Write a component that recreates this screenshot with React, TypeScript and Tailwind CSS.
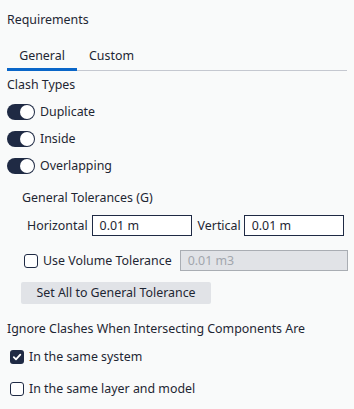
import React from "react";

function Toggle() {
  return (
    <div className="shrink-0 w-[28px] h-[16px] rounded-full bg-[#1f2a44] flex items-center justify-end pr-[1px]">
      <div className="w-[14px] h-[14px] rounded-full bg-white" />
    </div>
  );
}

function Check({ checked }: { checked?: boolean }) {
  return checked ? (
    <div className="shrink-0 w-[14px] h-[14px] rounded-[3px] bg-[#1f2a44] flex items-center justify-center">
      <svg width="10" height="10" viewBox="0 0 10 10">
        <path d="M1.8 5.2 L4 7.4 L8.3 2.6" stroke="white" strokeWidth="1.8" fill="none" strokeLinecap="round" strokeLinejoin="round" />
      </svg>
    </div>
  ) : (
    <div className="shrink-0 w-[14px] h-[14px] rounded-[3px] border border-[#1f2a44] bg-white" />
  );
}

export default function App() {
  return (
    <div className="w-[354px] h-[409px] bg-[#f9fafa] text-[#1e2633] text-[12.4px] leading-[18px] overflow-hidden whitespace-nowrap" style={{ fontFamily: "'Noto Sans', sans-serif" }}>
      <div className="px-[7px]">
        <div className="pt-[11px] h-[31px]">Requirements</div>
        <div className="mt-[15px] flex w-[340px] border-b border-[#c5c8d0] h-[25px]">
          <div className="w-[70px] pt-[1px] text-center border-b-[3px] border-[#0a66c8] -mb-[1px]">General</div>
          <div className="ml-[12px] pt-[1px]">Custom</div>
        </div>
        <div className="mt-[5px]">Clash Types</div>
        <div className="mt-[9px] flex flex-col gap-[9px]">
          {["Duplicate", "Inside", "Overlapping"].map((t) => (
            <div key={t} className="flex items-center gap-[5px]">
              <Toggle />
              <span>{t}</span>
            </div>
          ))}
        </div>
        <div className="ml-[15px] mt-[14px]">General Tolerances (G)</div>
        <div className="ml-[20px] mt-[8px] flex items-center">
          <span>Horizontal</span>
          <div className="ml-[4px] shrink-0 w-[100px] h-[21px] border border-[#1f2a44] bg-white px-[7px] flex items-center">0.01 m</div>
          <span className="ml-[6px]">Vertical</span>
          <div className="ml-[3px] shrink-0 w-[100px] h-[21px] border border-[#1f2a44] bg-white px-[7px] flex items-center">0.01 m</div>
        </div>
        <div className="ml-[17px] mt-[14px] flex items-center">
          <Check />
          <span className="ml-[5px]">Use Volume Tolerance</span>
          <div className="ml-[8px] shrink-0 w-[168px] h-[21px] border border-[#a9adb3] bg-[#e1e3e7] px-[7px] flex items-center text-[#a2a6ad]">0.01 m3</div>
        </div>
        <div className="ml-[14px] mt-[11px] w-[190px] h-[22px] rounded-[2px] bg-[#e1e3e7] flex items-center justify-center">Set All to General Tolerance</div>
        <div className="mt-[16px]">Ignore Clashes When Intersecting Components Are</div>
        <div className="ml-[3px] mt-[10px] flex items-center gap-[5px]">
          <Check checked />
          <span>In the same system</span>
        </div>
        <div className="ml-[3px] mt-[14px] flex items-center gap-[5px]">
          <Check />
          <span>In the same layer and model</span>
        </div>
      </div>
    </div>
  );
}
